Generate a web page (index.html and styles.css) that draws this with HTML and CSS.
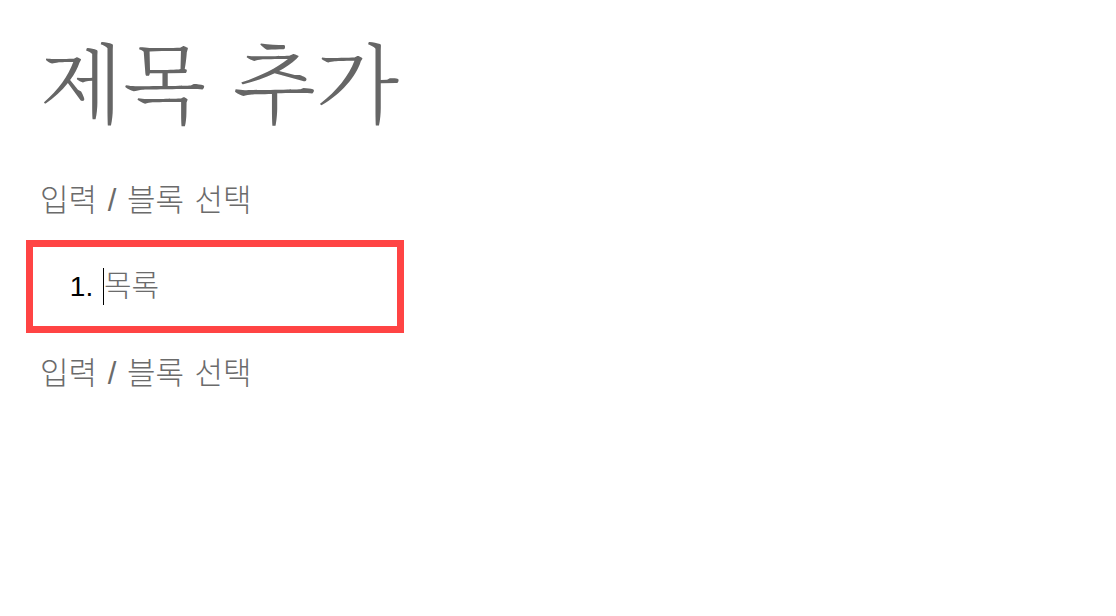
FILE: index.html
```html
<!DOCTYPE html>
<html lang="ko">
<head>
<meta charset="utf-8">
<link rel="stylesheet" href="styles.css">
</head>
<body>
<main class="editor">
  <h1 class="title">제목 추가</h1>
  <p class="placeholder">입력 / 블록 선택</p>
  <div class="block selected">
    <ol class="list">
      <li><span class="caret"></span><span class="hint">목록</span></li>
    </ol>
  </div>
  <p class="placeholder">입력 / 블록 선택</p>
</main>
</body>
</html>
```
FILE: styles.css
```css
html, body {
  margin: 0;
  padding: 0;
  background: #ffffff;
}
.editor {
  padding: 36px 0 0 26px;
  width: 378px;
  font-family: "Liberation Sans", "Noto Sans CJK KR", sans-serif;
}
.title {
  margin: 0 0 0 14px;
  font-family: "Noto Serif CJK KR", "Noto Sans CJK KR", serif;
  font-weight: 300;
  font-size: 86px;
  line-height: 86px;
  color: #666666;
}
.placeholder {
  margin: 0 0 0 14px;
  font-size: 31px;
  line-height: 40px;
  word-spacing: 2px;
  font-weight: 300;
  color: #6b6b6b;
}
.title + .placeholder {
  margin-top: 59px;
  margin-bottom: 19px;
}
.block {
  box-sizing: border-box;
  width: 378px;
  height: 93px;
  border: 7px solid #ff4444;
  display: flex;
  align-items: center;
  margin-bottom: 21px;
}
.list {
  margin: 0;
  padding: 0 0 0 68px;
  font-size: 28px;
  line-height: 40px;
  color: #000000;
}
.list li {
  display: list-item;
}
.caret {
  display: inline-block;
  width: 1px;
  height: 37px;
  background: #000;
  vertical-align: -9px;
  margin-left: 2px;
}
.hint {
  font-size: 30px;
  font-weight: 300;
  color: #6b6b6b;
}
```
